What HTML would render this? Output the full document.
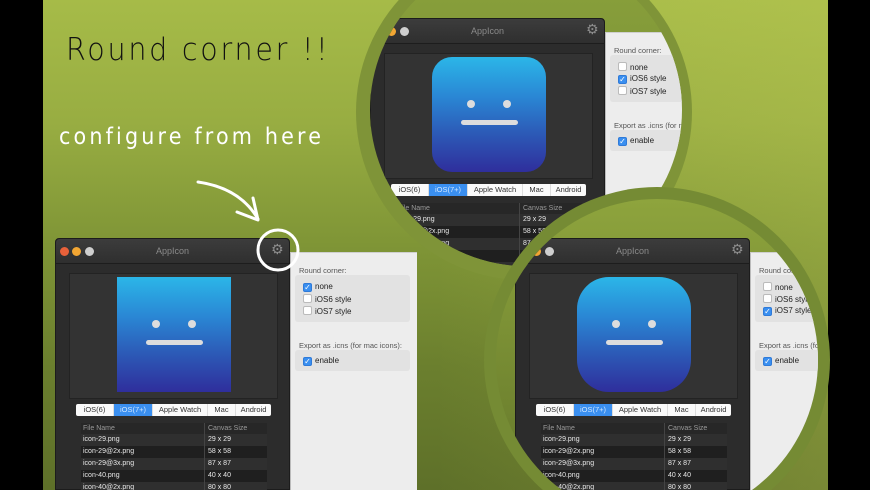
<!DOCTYPE html>
<html><head><meta charset="utf-8"><style>
*{margin:0;padding:0;box-sizing:border-box}
html,body{width:870px;height:490px;overflow:hidden;background:#000}
#root{position:absolute;left:0;top:0;width:870px;height:490px;overflow:hidden;background:#000;font-family:"Liberation Sans","DejaVu Sans",sans-serif}
.bg{position:absolute;left:43px;top:0;width:785px;height:490px;overflow:hidden;background:linear-gradient(180deg,#a6bb48 0%,#98ad42 25%,#7f9536 50%,#6b7f2e 75%,#5e7029 100%)}
.bg2{position:absolute;left:43px;top:0;width:785px;height:490px;background:linear-gradient(90deg,rgba(0,0,0,0) 50%,rgba(200,210,90,0.25) 100%)}
.circ{position:absolute;border-radius:50%;overflow:hidden}
.win{position:absolute;width:362px;height:252px;font-size:8px;overflow:hidden}
.dark{position:absolute;left:0;top:0;width:235px;height:252px;background:#2c2c2c;border-radius:4px 4px 0 0;border:1px solid #1c1c1c}
.tb{position:absolute;left:0;top:0;width:233px;height:25px;background:linear-gradient(#3c3c3c,#2f2f2f);border-bottom:1px solid #1d1d1d;border-radius:4px 4px 0 0}
.dot{position:absolute;top:8px;width:9px;height:9px;border-radius:50%}
.title{position:absolute;top:7px;left:0;width:233px;text-align:center;color:#8a8a8a;font-size:9px}
.gear{position:absolute;top:3px;left:215px;color:#8d8d8d;font-size:14px;font-family:"DejaVu Sans",sans-serif}
.prev{position:absolute;left:13px;top:34px;width:209px;height:126px;background:#333;border:1px solid #232323}
.icon{position:absolute;left:47px;top:3px;width:114px;height:115px;background:linear-gradient(180deg,#2bb6e8 0%,#2a86d4 35%,#2c5cb8 65%,#2f2e9c 100%)}
.eye{position:absolute;top:43px;width:8px;height:8px;border-radius:50%;background:#ddd}
.mouth{position:absolute;left:29px;top:63px;width:57px;height:5px;border-radius:3px;background:#ddd}
.tabs{position:absolute;left:20px;top:165px;width:195px;height:12px;background:#fafafa;border-radius:2px;display:flex;font-size:7.5px;color:#333;line-height:12px}
.tabs div{text-align:center;border-right:1px solid #ddd}
.tabs .on{background:#3a8ff0;color:#cfe6ff}
.tbl{position:absolute;left:25px;top:184px;width:186px;font-size:7px;color:#e8e8e8}
.row{height:12px;line-height:12px;display:flex}
.row div:first-child{width:124px;padding-left:2px;border-right:1px solid #444}
.row div:last-child{padding-left:3px}
.hd{background:#272727;color:#999;height:11px;line-height:11px}
.r1{background:#2f2f2f}.r2{background:#1f1f1f}
.light{position:absolute;left:235px;top:14px;width:127px;height:238px;background:#ededed;border-top:1px solid #cfcfcf;border-left:1px solid #bbb;color:#333;font-size:7.5px}
.lbl{position:absolute;left:8px;color:#555}
.grp{position:absolute;left:4px;width:115px;background:#e2e2e2;border-radius:3px}
.cb{position:absolute;left:12px;font-size:8px;color:#222}
.cb i{display:inline-block;width:9px;height:9px;border:1px solid #bbb;background:#fff;border-radius:2px;vertical-align:-1px;margin-right:3px;font-style:normal;font-size:8px;line-height:7px;text-align:center;color:#fff}
.cb i.c{background:#3a8ff0;border-color:#2f7ad8}
</style></head><body><div id="root">
<div class="bg"></div><div class="bg2"></div>

<div style="position:absolute;left:66px;top:32px;font-size:31px;letter-spacing:3px;color:#111;font-family:'DejaVu Sans',sans-serif;font-weight:200;transform:scaleX(0.92);transform-origin:left">Round corner !!</div>
<div style="position:absolute;left:59px;top:124px;font-size:23px;letter-spacing:3.5px;color:#fff;font-family:'DejaVu Sans',sans-serif;transform:scaleX(0.9);transform-origin:left">configure from here</div>
<svg style="position:absolute;left:0;top:0" width="870" height="490">
<path d="M198 182 Q240 188 258 219" stroke="#fff" stroke-width="3" fill="none" stroke-linecap="round"/>
<path d="M237 212 L258 220 L253 198" stroke="#fff" stroke-width="3" fill="none" stroke-linecap="round" stroke-linejoin="round"/>
</svg>

<!-- LEFT WINDOW -->
<div class="win" style="left:55px;top:238px">
 <div class="dark"><div class="tb"><div class="dot" style="left:4px;background:#e8613a"></div><div class="dot" style="left:16px;background:#f2a633"></div><div class="dot" style="left:29px;background:#cfcfcf"></div><div class="title">AppIcon</div><div class="gear">⚙</div></div>
  <div class="prev"><div class="icon"><div class="eye" style="left:35px"></div><div class="eye" style="left:71px"></div><div class="mouth"></div></div></div>
  <div class="tabs"><div style="width:38px">iOS(6)</div><div class="on" style="width:39px">iOS(7+)</div><div style="width:55px">Apple Watch</div><div style="width:28px">Mac</div><div style="width:35px;border:0">Android</div></div>
  <div class="tbl"><div class="row hd"><div>File Name</div><div>Canvas Size</div></div><div class="row r1"><div>icon-29.png</div><div>29 x 29</div></div><div class="row r2"><div>icon-29@2x.png</div><div>58 x 58</div></div><div class="row r1"><div>icon-29@3x.png</div><div>87 x 87</div></div><div class="row r2"><div>icon-40.png</div><div>40 x 40</div></div><div class="row r1"><div>icon-40@2x.png</div><div>80 x 80</div></div></div>
 </div>
 <div class="light"><div class="lbl" style="top:13px">Round corner:</div><div class="grp" style="top:22px;height:47px"></div>
  <div class="cb" style="top:29px"><i class="c">✓</i>none</div><div class="cb" style="top:41px"><i></i>iOS6 style</div><div class="cb" style="top:53px"><i></i>iOS7 style</div>
  <div class="lbl" style="top:88px">Export as .icns (for mac icons):</div><div class="grp" style="top:97px;height:21px"></div><div class="cb" style="top:103px"><i class="c">✓</i>enable</div></div>
</div>
<svg style="position:absolute;left:0;top:0" width="870" height="490"><circle cx="278" cy="250" r="20" stroke="#fff" stroke-width="3" fill="none"/></svg>

<!-- TOP CIRCLE -->
<div class="circ" style="left:356px;top:-56px;width:336px;height:336px;background:#7f9438"></div>
<div class="circ" style="left:370px;top:-46px;width:312px;height:312px;background:linear-gradient(#8ba23c,#6f8530)">
 <div class="win" style="left:0px;top:64px">
 <div class="dark"><div class="tb"><div class="dot" style="left:4px;background:#e8613a"></div><div class="dot" style="left:16px;background:#f2a633"></div><div class="dot" style="left:29px;background:#cfcfcf"></div><div class="title">AppIcon</div><div class="gear">⚙</div></div>
  <div class="prev"><div class="icon" style="border-radius:20px"><div class="eye" style="left:35px"></div><div class="eye" style="left:71px"></div><div class="mouth"></div></div></div>
  <div class="tabs"><div style="width:38px">iOS(6)</div><div class="on" style="width:39px">iOS(7+)</div><div style="width:55px">Apple Watch</div><div style="width:28px">Mac</div><div style="width:35px;border:0">Android</div></div>
  <div class="tbl"><div class="row hd"><div>File Name</div><div>Canvas Size</div></div><div class="row r1"><div>icon-29.png</div><div>29 x 29</div></div><div class="row r2"><div>icon-29@2x.png</div><div>58 x 58</div></div><div class="row r1"><div>icon-29@3x.png</div><div>87 x 87</div></div><div class="row r2"><div>icon-40.png</div><div>40 x 40</div></div><div class="row r1"><div>icon-40@2x.png</div><div>80 x 80</div></div></div>
 </div>
 <div class="light"><div class="lbl" style="top:13px">Round corner:</div><div class="grp" style="top:22px;height:47px"></div>
  <div class="cb" style="top:29px"><i></i>none</div><div class="cb" style="top:41px"><i class="c">✓</i>iOS6 style</div><div class="cb" style="top:53px"><i></i>iOS7 style</div>
  <div class="lbl" style="top:88px">Export as .icns (for mac icons):</div><div class="grp" style="top:97px;height:21px"></div><div class="cb" style="top:103px"><i class="c">✓</i>enable</div></div>
 </div>
</div>

<!-- BOTTOM CIRCLE -->
<div class="circ" style="left:484px;top:187px;width:346px;height:346px;background:#758b34"></div>
<div class="circ" style="left:496px;top:199px;width:322px;height:322px;background:linear-gradient(#8ea43d,#607329)">
 <div class="win" style="left:19px;top:39px">
 <div class="dark"><div class="tb"><div class="dot" style="left:4px;background:#e8613a"></div><div class="dot" style="left:16px;background:#f2a633"></div><div class="dot" style="left:29px;background:#cfcfcf"></div><div class="title">AppIcon</div><div class="gear">⚙</div></div>
  <div class="prev"><div class="icon" style="border-radius:32px"><div class="eye" style="left:35px"></div><div class="eye" style="left:71px"></div><div class="mouth"></div></div></div>
  <div class="tabs"><div style="width:38px">iOS(6)</div><div class="on" style="width:39px">iOS(7+)</div><div style="width:55px">Apple Watch</div><div style="width:28px">Mac</div><div style="width:35px;border:0">Android</div></div>
  <div class="tbl"><div class="row hd"><div>File Name</div><div>Canvas Size</div></div><div class="row r1"><div>icon-29.png</div><div>29 x 29</div></div><div class="row r2"><div>icon-29@2x.png</div><div>58 x 58</div></div><div class="row r1"><div>icon-29@3x.png</div><div>87 x 87</div></div><div class="row r2"><div>icon-40.png</div><div>40 x 40</div></div><div class="row r1"><div>icon-40@2x.png</div><div>80 x 80</div></div></div>
 </div>
 <div class="light"><div class="lbl" style="top:13px">Round corner:</div><div class="grp" style="top:22px;height:47px"></div>
  <div class="cb" style="top:29px"><i></i>none</div><div class="cb" style="top:41px"><i></i>iOS6 style</div><div class="cb" style="top:53px"><i class="c">✓</i>iOS7 style</div>
  <div class="lbl" style="top:88px">Export as .icns (for mac icons):</div><div class="grp" style="top:97px;height:21px"></div><div class="cb" style="top:103px"><i class="c">✓</i>enable</div></div>
 </div>
</div>
</div></body></html>
